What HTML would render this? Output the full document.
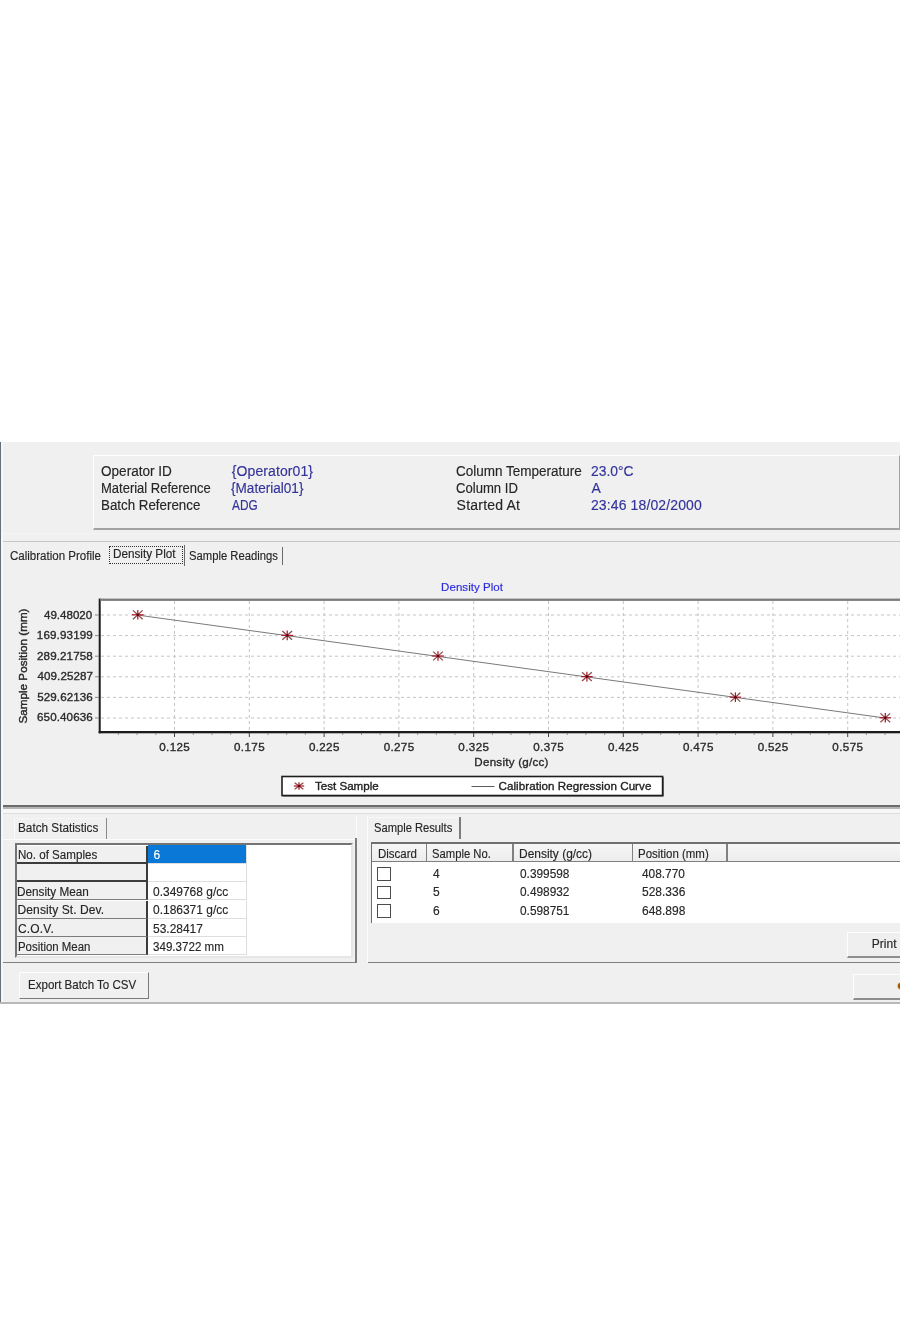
<!DOCTYPE html>
<html><head><meta charset="utf-8"><title>Density Plot</title>
<style>
html,body{margin:0;padding:0;background:#fff;}
body{width:900px;height:1322px;position:relative;overflow:hidden;font-family:"Liberation Sans",sans-serif;}
.abs{position:absolute;}
.t{position:absolute;white-space:pre;line-height:1;transform-origin:0 84.65%;-webkit-text-stroke:0.15px currentColor;font-family:"Liberation Sans",sans-serif;}
#blur{position:absolute;left:0;top:0;width:900px;height:1322px;filter:blur(0.6px);}
</style></head><body><div id="blur">
<div class="abs" style="left:0px;top:442px;width:900px;height:561.7px;background:#f0f0f0"></div>
<div class="abs" style="left:0px;top:442px;width:1.3px;height:561.5px;background:#667078"></div>
<div class="abs" style="left:1.3px;top:442px;width:1.3px;height:561.5px;background:#f5f8fa"></div>
<div class="abs" style="left:0px;top:1002.2px;width:900px;height:1.5px;background:#b8b8b8"></div>
<div class="abs" style="left:93px;top:454.6px;width:807px;height:75px;background:#f0f0f0;border-top:1.3px solid #fdfdfd;border-left:1.3px solid #fdfdfd;border-bottom:2.2px solid #a2a2a2;border-right:1.8px solid #a2a2a2;box-sizing:border-box"></div>
<div class="abs" style="left:3px;top:540.6px;width:897px;height:1.2px;background:#c6c6c6"></div>
<div class="abs" style="left:3px;top:533px;width:897px;height:1px;background:#f5f5f5"></div>
<div class="abs" style="left:109px;top:546px;width:73.5px;height:18px;border:1px dotted #333;box-sizing:border-box"></div>
<div class="abs" style="left:183.5px;top:544.5px;width:1.2px;height:21px;background:#6a6a6a"></div>
<div class="abs" style="left:282.3px;top:546.5px;width:1.2px;height:18px;background:#6a6a6a"></div>
<div class="abs" style="left:3px;top:804.7px;width:897px;height:2.7px;background:#6c6c6c"></div>
<div class="abs" style="left:3px;top:807.4px;width:897px;height:1.2px;background:#b4b4b4"></div>
<div class="abs" style="left:3px;top:808.6px;width:897px;height:4px;background:#f7f7f7"></div>
<div class="abs" style="left:3px;top:812.6px;width:897px;height:1px;background:#dcdcdc"></div>
<div class="abs" style="left:14px;top:818px;width:1px;height:21px;background:#fcfcfc"></div>
<div class="abs" style="left:14px;top:818px;width:92px;height:1px;background:#f6f6f6"></div>
<div class="abs" style="left:105.5px;top:818px;width:1.5px;height:21px;background:#8a8a8a"></div>
<div class="abs" style="left:3px;top:839px;width:353px;height:1px;background:#fcfcfc"></div>
<div class="abs" style="left:3px;top:961.6px;width:353.6px;height:1.6px;background:#808080"></div>
<div class="abs" style="left:355px;top:838.4px;width:1.6px;height:124.8px;background:#7c7c7c"></div>
<div class="abs" style="left:356.2px;top:816px;width:1.2px;height:22.4px;background:#fbfbfb"></div>
<div class="abs" style="left:14.5px;top:842.8px;width:338.5px;height:115.6px;background:#fff;border:2px solid #747474;border-right:2.5px solid #e6e6e6;border-bottom:2.5px solid #e6e6e6;box-sizing:border-box"></div>
<div class="abs" style="left:16.5px;top:845.6px;width:131px;height:18.299999999999955px;background:#f0f0f0;border-right:2px solid #3c3c3c;border-bottom:2px solid #3c3c3c;box-sizing:border-box"></div>
<div class="abs" style="left:147.5px;top:845.6px;width:99px;height:18.299999999999955px;border-right:1px solid #dedede;border-bottom:1px solid #dedede;box-sizing:border-box"></div>
<div class="abs" style="left:16.5px;top:863.9px;width:131px;height:18.300000000000068px;background:#f0f0f0;border-right:2px solid #3c3c3c;border-bottom:2px solid #3c3c3c;box-sizing:border-box"></div>
<div class="abs" style="left:147.5px;top:863.9px;width:99px;height:18.300000000000068px;border-right:1px solid #dedede;border-bottom:1px solid #dedede;box-sizing:border-box"></div>
<div class="abs" style="left:16.5px;top:882.2px;width:131px;height:18.299999999999955px;background:#f0f0f0;border-right:2px solid #3c3c3c;border-bottom:1.5px solid #7c7c7c;box-sizing:border-box"></div>
<div class="abs" style="left:147.5px;top:882.2px;width:99px;height:18.299999999999955px;border-right:1px solid #dedede;border-bottom:1px solid #dedede;box-sizing:border-box"></div>
<div class="abs" style="left:16.5px;top:900.5px;width:131px;height:18.300000000000068px;background:#f0f0f0;border-right:2px solid #3c3c3c;border-bottom:1.5px solid #7c7c7c;box-sizing:border-box"></div>
<div class="abs" style="left:147.5px;top:900.5px;width:99px;height:18.300000000000068px;border-right:1px solid #dedede;border-bottom:1px solid #dedede;box-sizing:border-box"></div>
<div class="abs" style="left:16.5px;top:918.8000000000001px;width:131px;height:18.299999999999955px;background:#f0f0f0;border-right:2px solid #3c3c3c;border-bottom:1.5px solid #7c7c7c;box-sizing:border-box"></div>
<div class="abs" style="left:147.5px;top:918.8000000000001px;width:99px;height:18.299999999999955px;border-right:1px solid #dedede;border-bottom:1px solid #dedede;box-sizing:border-box"></div>
<div class="abs" style="left:16.5px;top:937.1px;width:131px;height:18.300000000000068px;background:#f0f0f0;border-right:2px solid #3c3c3c;border-bottom:1.5px solid #7c7c7c;box-sizing:border-box"></div>
<div class="abs" style="left:147.5px;top:937.1px;width:99px;height:18.300000000000068px;border-right:1px solid #dedede;border-bottom:1px solid #dedede;box-sizing:border-box"></div>
<div class="abs" style="left:148px;top:845px;width:98px;height:17.5px;background:#0a78d6"></div>
<div class="abs" style="left:18.6px;top:972px;width:130.2px;height:26.7px;background:#f0f0f0;border-top:1.3px solid #fdfdfd;border-left:1.3px solid #fdfdfd;border-right:1.6px solid #7a7a7a;border-bottom:1.6px solid #7a7a7a;box-sizing:border-box"></div>
<div class="abs" style="left:366.8px;top:816px;width:1.2px;height:146px;background:#fcfcfc"></div>
<div class="abs" style="left:367.5px;top:817px;width:93px;height:1px;background:#f7f7f7"></div>
<div class="abs" style="left:459.3px;top:817px;width:1.4px;height:21.5px;background:#7c7c7c"></div>
<div class="abs" style="left:367.5px;top:961.6px;width:533px;height:1.6px;background:#808080"></div>
<div class="abs" style="left:370.7px;top:842px;width:530px;height:81.2px;background:#fff;border-top:2px solid #707070;border-left:1.5px solid #707070;box-sizing:border-box"></div>
<div class="abs" style="left:372px;top:843.6px;width:528px;height:18.3px;background:linear-gradient(#f6f6f6,#ededed);border-bottom:1.6px solid #808080;box-sizing:border-box"></div>
<div class="abs" style="left:425.5px;top:843.6px;width:1.5px;height:17.6px;background:#808080"></div>
<div class="abs" style="left:512px;top:843.6px;width:1.5px;height:17.6px;background:#808080"></div>
<div class="abs" style="left:631.5px;top:843.6px;width:1.5px;height:17.6px;background:#808080"></div>
<div class="abs" style="left:726px;top:843.6px;width:1.5px;height:17.6px;background:#808080"></div>
<div class="abs" style="left:377.2px;top:867.2px;width:13.8px;height:13.6px;background:#fff;border:1.6px solid #4c4c4c;box-sizing:border-box"></div>
<div class="abs" style="left:377.2px;top:885.6500000000001px;width:13.8px;height:13.6px;background:#fff;border:1.6px solid #4c4c4c;box-sizing:border-box"></div>
<div class="abs" style="left:377.2px;top:904.1px;width:13.8px;height:13.6px;background:#fff;border:1.6px solid #4c4c4c;box-sizing:border-box"></div>
<div class="abs" style="left:847px;top:932px;width:60px;height:26px;background:#efefef;border-top:1px solid #fdfdfd;border-left:1px solid #fdfdfd;border-bottom:2px solid #8e8e8e;box-sizing:border-box"></div>
<div class="abs" style="left:852.8px;top:973.6px;width:60px;height:26.4px;background:#efefef;border-top:1px solid #fdfdfd;border-left:1px solid #fdfdfd;border-bottom:2px solid #8e8e8e;box-sizing:border-box"></div>
<div class="abs" style="left:898px;top:982.5px;width:6.4px;height:6.4px;background:#9a5408;border-radius:50%;box-shadow:0 0 1px 0.5px #e09a3c"></div>
<svg class="abs" style="left:0;top:0" width="900" height="1322" viewBox="0 0 900 1322">
<rect x="100" y="600" width="800" height="132" fill="#fff"/>
<line x1="174.5" y1="601" x2="174.5" y2="731" stroke="#c4c4c4" stroke-width="1" stroke-dasharray="3,3"/>
<line x1="249.3" y1="601" x2="249.3" y2="731" stroke="#c4c4c4" stroke-width="1" stroke-dasharray="3,3"/>
<line x1="324.1" y1="601" x2="324.1" y2="731" stroke="#c4c4c4" stroke-width="1" stroke-dasharray="3,3"/>
<line x1="398.9" y1="601" x2="398.9" y2="731" stroke="#c4c4c4" stroke-width="1" stroke-dasharray="3,3"/>
<line x1="473.7" y1="601" x2="473.7" y2="731" stroke="#c4c4c4" stroke-width="1" stroke-dasharray="3,3"/>
<line x1="548.5" y1="601" x2="548.5" y2="731" stroke="#c4c4c4" stroke-width="1" stroke-dasharray="3,3"/>
<line x1="623.3" y1="601" x2="623.3" y2="731" stroke="#c4c4c4" stroke-width="1" stroke-dasharray="3,3"/>
<line x1="698.1" y1="601" x2="698.1" y2="731" stroke="#c4c4c4" stroke-width="1" stroke-dasharray="3,3"/>
<line x1="772.9" y1="601" x2="772.9" y2="731" stroke="#c4c4c4" stroke-width="1" stroke-dasharray="3,3"/>
<line x1="847.7" y1="601" x2="847.7" y2="731" stroke="#c4c4c4" stroke-width="1" stroke-dasharray="3,3"/>
<line x1="101" y1="615.0" x2="900" y2="615.0" stroke="#c4c4c4" stroke-width="1" stroke-dasharray="3,3"/>
<line x1="101" y1="635.6" x2="900" y2="635.6" stroke="#c4c4c4" stroke-width="1" stroke-dasharray="3,3"/>
<line x1="101" y1="656.2" x2="900" y2="656.2" stroke="#c4c4c4" stroke-width="1" stroke-dasharray="3,3"/>
<line x1="101" y1="676.8" x2="900" y2="676.8" stroke="#c4c4c4" stroke-width="1" stroke-dasharray="3,3"/>
<line x1="101" y1="697.4" x2="900" y2="697.4" stroke="#c4c4c4" stroke-width="1" stroke-dasharray="3,3"/>
<line x1="101" y1="718.0" x2="900" y2="718.0" stroke="#c4c4c4" stroke-width="1" stroke-dasharray="3,3"/>
<line x1="137.1" y1="615" x2="885.1" y2="718" stroke="#7a7a7a" stroke-width="1"/>
<rect x="98.7" y="598.6" width="2" height="134.7" fill="#1c1c1c"/>
<rect x="100" y="598.6" width="800" height="2.3" fill="#7c7c7c"/>
<rect x="98.7" y="731" width="801.3" height="2.3" fill="#1c1c1c"/>
<line x1="95" y1="615.0" x2="99" y2="615.0" stroke="#888" stroke-width="1"/>
<line x1="95" y1="635.6" x2="99" y2="635.6" stroke="#888" stroke-width="1"/>
<line x1="95" y1="656.2" x2="99" y2="656.2" stroke="#888" stroke-width="1"/>
<line x1="95" y1="676.8" x2="99" y2="676.8" stroke="#888" stroke-width="1"/>
<line x1="95" y1="697.4" x2="99" y2="697.4" stroke="#888" stroke-width="1"/>
<line x1="95" y1="718.0" x2="99" y2="718.0" stroke="#888" stroke-width="1"/>
<line x1="118.4" y1="733" x2="118.4" y2="735.0" stroke="#8a8a8a" stroke-width="1"/>
<line x1="137.1" y1="733" x2="137.1" y2="735.0" stroke="#8a8a8a" stroke-width="1"/>
<line x1="155.8" y1="733" x2="155.8" y2="735.0" stroke="#8a8a8a" stroke-width="1"/>
<line x1="174.5" y1="733" x2="174.5" y2="737.0" stroke="#444" stroke-width="1"/>
<line x1="193.2" y1="733" x2="193.2" y2="735.0" stroke="#8a8a8a" stroke-width="1"/>
<line x1="211.9" y1="733" x2="211.9" y2="735.0" stroke="#8a8a8a" stroke-width="1"/>
<line x1="230.6" y1="733" x2="230.6" y2="735.0" stroke="#8a8a8a" stroke-width="1"/>
<line x1="249.3" y1="733" x2="249.3" y2="737.0" stroke="#444" stroke-width="1"/>
<line x1="268.0" y1="733" x2="268.0" y2="735.0" stroke="#8a8a8a" stroke-width="1"/>
<line x1="286.7" y1="733" x2="286.7" y2="735.0" stroke="#8a8a8a" stroke-width="1"/>
<line x1="305.4" y1="733" x2="305.4" y2="735.0" stroke="#8a8a8a" stroke-width="1"/>
<line x1="324.1" y1="733" x2="324.1" y2="737.0" stroke="#444" stroke-width="1"/>
<line x1="342.8" y1="733" x2="342.8" y2="735.0" stroke="#8a8a8a" stroke-width="1"/>
<line x1="361.5" y1="733" x2="361.5" y2="735.0" stroke="#8a8a8a" stroke-width="1"/>
<line x1="380.2" y1="733" x2="380.2" y2="735.0" stroke="#8a8a8a" stroke-width="1"/>
<line x1="398.9" y1="733" x2="398.9" y2="737.0" stroke="#444" stroke-width="1"/>
<line x1="417.6" y1="733" x2="417.6" y2="735.0" stroke="#8a8a8a" stroke-width="1"/>
<line x1="436.3" y1="733" x2="436.3" y2="735.0" stroke="#8a8a8a" stroke-width="1"/>
<line x1="455.0" y1="733" x2="455.0" y2="735.0" stroke="#8a8a8a" stroke-width="1"/>
<line x1="473.7" y1="733" x2="473.7" y2="737.0" stroke="#444" stroke-width="1"/>
<line x1="492.4" y1="733" x2="492.4" y2="735.0" stroke="#8a8a8a" stroke-width="1"/>
<line x1="511.1" y1="733" x2="511.1" y2="735.0" stroke="#8a8a8a" stroke-width="1"/>
<line x1="529.8" y1="733" x2="529.8" y2="735.0" stroke="#8a8a8a" stroke-width="1"/>
<line x1="548.5" y1="733" x2="548.5" y2="737.0" stroke="#444" stroke-width="1"/>
<line x1="567.2" y1="733" x2="567.2" y2="735.0" stroke="#8a8a8a" stroke-width="1"/>
<line x1="585.9" y1="733" x2="585.9" y2="735.0" stroke="#8a8a8a" stroke-width="1"/>
<line x1="604.6" y1="733" x2="604.6" y2="735.0" stroke="#8a8a8a" stroke-width="1"/>
<line x1="623.3" y1="733" x2="623.3" y2="737.0" stroke="#444" stroke-width="1"/>
<line x1="642.0" y1="733" x2="642.0" y2="735.0" stroke="#8a8a8a" stroke-width="1"/>
<line x1="660.7" y1="733" x2="660.7" y2="735.0" stroke="#8a8a8a" stroke-width="1"/>
<line x1="679.4" y1="733" x2="679.4" y2="735.0" stroke="#8a8a8a" stroke-width="1"/>
<line x1="698.1" y1="733" x2="698.1" y2="737.0" stroke="#444" stroke-width="1"/>
<line x1="716.8" y1="733" x2="716.8" y2="735.0" stroke="#8a8a8a" stroke-width="1"/>
<line x1="735.5" y1="733" x2="735.5" y2="735.0" stroke="#8a8a8a" stroke-width="1"/>
<line x1="754.2" y1="733" x2="754.2" y2="735.0" stroke="#8a8a8a" stroke-width="1"/>
<line x1="772.9" y1="733" x2="772.9" y2="737.0" stroke="#444" stroke-width="1"/>
<line x1="791.6" y1="733" x2="791.6" y2="735.0" stroke="#8a8a8a" stroke-width="1"/>
<line x1="810.3" y1="733" x2="810.3" y2="735.0" stroke="#8a8a8a" stroke-width="1"/>
<line x1="829.0" y1="733" x2="829.0" y2="735.0" stroke="#8a8a8a" stroke-width="1"/>
<line x1="847.7" y1="733" x2="847.7" y2="737.0" stroke="#444" stroke-width="1"/>
<line x1="866.4" y1="733" x2="866.4" y2="735.0" stroke="#8a8a8a" stroke-width="1"/>
<line x1="885.1" y1="733" x2="885.1" y2="735.0" stroke="#8a8a8a" stroke-width="1"/>
<line x1="132.93" y1="610.39" x2="142.67" y2="619.21" stroke="#8c4a4a" stroke-width="1.25"/><line x1="132.93" y1="619.21" x2="142.67" y2="610.39" stroke="#8c4a4a" stroke-width="1.25"/><line x1="132.00" y1="614.80" x2="143.60" y2="614.80" stroke="#b01828" stroke-width="1.25"/><line x1="137.80" y1="609.99" x2="137.80" y2="619.61" stroke="#b01828" stroke-width="1.25"/><circle cx="137.80" cy="614.80" r="1.3" fill="#5c0010"/>
<line x1="282.33" y1="630.99" x2="292.07" y2="639.81" stroke="#8c4a4a" stroke-width="1.25"/><line x1="282.33" y1="639.81" x2="292.07" y2="630.99" stroke="#8c4a4a" stroke-width="1.25"/><line x1="281.40" y1="635.40" x2="293.00" y2="635.40" stroke="#b01828" stroke-width="1.25"/><line x1="287.20" y1="630.59" x2="287.20" y2="640.21" stroke="#b01828" stroke-width="1.25"/><circle cx="287.20" cy="635.40" r="1.3" fill="#5c0010"/>
<line x1="433.13" y1="651.59" x2="442.87" y2="660.41" stroke="#8c4a4a" stroke-width="1.25"/><line x1="433.13" y1="660.41" x2="442.87" y2="651.59" stroke="#8c4a4a" stroke-width="1.25"/><line x1="432.20" y1="656.00" x2="443.80" y2="656.00" stroke="#b01828" stroke-width="1.25"/><line x1="438.00" y1="651.19" x2="438.00" y2="660.81" stroke="#b01828" stroke-width="1.25"/><circle cx="438.00" cy="656.00" r="1.3" fill="#5c0010"/>
<line x1="582.03" y1="672.19" x2="591.77" y2="681.01" stroke="#8c4a4a" stroke-width="1.25"/><line x1="582.03" y1="681.01" x2="591.77" y2="672.19" stroke="#8c4a4a" stroke-width="1.25"/><line x1="581.10" y1="676.60" x2="592.70" y2="676.60" stroke="#b01828" stroke-width="1.25"/><line x1="586.90" y1="671.79" x2="586.90" y2="681.41" stroke="#b01828" stroke-width="1.25"/><circle cx="586.90" cy="676.60" r="1.3" fill="#5c0010"/>
<line x1="730.53" y1="692.79" x2="740.27" y2="701.61" stroke="#8c4a4a" stroke-width="1.25"/><line x1="730.53" y1="701.61" x2="740.27" y2="692.79" stroke="#8c4a4a" stroke-width="1.25"/><line x1="729.60" y1="697.20" x2="741.20" y2="697.20" stroke="#b01828" stroke-width="1.25"/><line x1="735.40" y1="692.39" x2="735.40" y2="702.01" stroke="#b01828" stroke-width="1.25"/><circle cx="735.40" cy="697.20" r="1.3" fill="#5c0010"/>
<line x1="880.43" y1="713.39" x2="890.17" y2="722.21" stroke="#8c4a4a" stroke-width="1.25"/><line x1="880.43" y1="722.21" x2="890.17" y2="713.39" stroke="#8c4a4a" stroke-width="1.25"/><line x1="879.50" y1="717.80" x2="891.10" y2="717.80" stroke="#b01828" stroke-width="1.25"/><line x1="885.30" y1="712.99" x2="885.30" y2="722.61" stroke="#b01828" stroke-width="1.25"/><circle cx="885.30" cy="717.80" r="1.3" fill="#5c0010"/>
<rect x="282.6" y="777.2" width="381" height="19.3" fill="#3a3a3a"/>
<rect x="282" y="776.5" width="380.6" height="19" fill="#fff" stroke="#1e1e1e" stroke-width="1.6"/>
<line x1="294.63" y1="782.64" x2="303.37" y2="789.36" stroke="#8c4a4a" stroke-width="1.25"/><line x1="294.63" y1="789.36" x2="303.37" y2="782.64" stroke="#8c4a4a" stroke-width="1.25"/><line x1="293.80" y1="786.00" x2="304.20" y2="786.00" stroke="#b01828" stroke-width="1.25"/><line x1="299.00" y1="782.33" x2="299.00" y2="789.67" stroke="#b01828" stroke-width="1.25"/><circle cx="299.00" cy="786.00" r="1.3" fill="#5c0010"/>
<line x1="471.5" y1="786.5" x2="494.5" y2="786.5" stroke="#5a5a5a" stroke-width="1"/>
</svg>
<span class="t" style="left:23.2px;top:665.8px;font-size:11.6px;color:#2a2a2a;-webkit-text-stroke:0.4px currentColor;transform:translate(-50%,-50%) rotate(-90deg);transform-origin:center;letter-spacing:0.05px">Sample Position (mm)</span>
<span class="t" style="left:101.34px;top:464.0px;font-size:14px;color:#262626;letter-spacing:0.00px;transform:scaleX(0.9687);">Operator ID</span>
<span class="t" style="left:100.89px;top:481.4px;font-size:14px;color:#262626;letter-spacing:0.00px;transform:scaleX(0.9284);">Material Reference</span>
<span class="t" style="left:100.89px;top:498.3px;font-size:14px;color:#262626;letter-spacing:0.00px;transform:scaleX(0.9522);">Batch Reference</span>
<span class="t" style="left:231.78px;top:464.0px;font-size:14px;color:#33339a;letter-spacing:0.10px;">{Operator01}</span>
<span class="t" style="left:231.32px;top:481.4px;font-size:14px;color:#33339a;letter-spacing:0.00px;transform:scaleX(0.9697);">{Material01}</span>
<span class="t" style="left:232.00px;top:498.3px;font-size:14px;color:#33339a;letter-spacing:0.00px;transform:scaleX(0.8468);">ADG</span>
<span class="t" style="left:456.39px;top:464.0px;font-size:14px;color:#262626;letter-spacing:0.00px;transform:scaleX(0.9644);">Column Temperature</span>
<span class="t" style="left:456.39px;top:481.4px;font-size:14px;color:#262626;letter-spacing:0.00px;transform:scaleX(0.9352);">Column ID</span>
<span class="t" style="left:456.61px;top:498.4px;font-size:14px;color:#262626;letter-spacing:0.21px;">Started At</span>
<span class="t" style="left:590.97px;top:464.0px;font-size:14px;color:#33339a;letter-spacing:0.00px;transform:scaleX(0.9892);">23.0°C</span>
<span class="t" style="left:591.40px;top:481.4px;font-size:14px;color:#33339a;letter-spacing:0.00px;">A</span>
<span class="t" style="left:590.97px;top:498.4px;font-size:14px;color:#33339a;letter-spacing:0.12px;">23:46 18/02/2000</span>
<span class="t" style="left:9.55px;top:549.6px;font-size:12px;color:#262626;letter-spacing:0.00px;transform:scaleX(0.9598);">Calibration Profile</span>
<span class="t" style="left:113.17px;top:548.1px;font-size:12px;color:#262626;letter-spacing:0.00px;transform:scaleX(0.9770);">Density Plot</span>
<span class="t" style="left:188.55px;top:549.6px;font-size:12px;color:#262626;letter-spacing:0.00px;transform:scaleX(0.9385);">Sample Readings</span>
<span class="t" style="left:441.10px;top:581.6px;font-size:11.5px;color:#2a2ae0;letter-spacing:0.05px;">Density Plot</span>
<span class="t" style="left:44.05px;top:608.5px;font-size:11.6px;color:#2a2a2a;letter-spacing:0.00px;transform:scaleX(0.9972);-webkit-text-stroke:0.35px currentColor;">49.48020</span>
<span class="t" style="left:36.83px;top:629.1px;font-size:11.6px;color:#2a2a2a;letter-spacing:0.14px;-webkit-text-stroke:0.35px currentColor;">169.93199</span>
<span class="t" style="left:37.05px;top:649.6px;font-size:11.6px;color:#2a2a2a;letter-spacing:0.11px;-webkit-text-stroke:0.35px currentColor;">289.21758</span>
<span class="t" style="left:37.50px;top:670.4px;font-size:11.6px;color:#2a2a2a;letter-spacing:0.08px;-webkit-text-stroke:0.35px currentColor;">409.25287</span>
<span class="t" style="left:37.27px;top:691.0px;font-size:11.6px;color:#2a2a2a;letter-spacing:0.08px;-webkit-text-stroke:0.35px currentColor;">529.62136</span>
<span class="t" style="left:37.05px;top:710.9px;font-size:11.6px;color:#2a2a2a;letter-spacing:0.11px;-webkit-text-stroke:0.35px currentColor;">650.40636</span>
<span class="t" style="left:159.28px;top:741.2px;font-size:11.6px;color:#2a2a2a;letter-spacing:0.36px;-webkit-text-stroke:0.35px currentColor;">0.125</span>
<span class="t" style="left:233.99px;top:741.2px;font-size:11.6px;color:#2a2a2a;letter-spacing:0.42px;-webkit-text-stroke:0.35px currentColor;">0.175</span>
<span class="t" style="left:308.92px;top:741.2px;font-size:11.6px;color:#2a2a2a;letter-spacing:0.36px;-webkit-text-stroke:0.35px currentColor;">0.225</span>
<span class="t" style="left:383.63px;top:741.2px;font-size:11.6px;color:#2a2a2a;letter-spacing:0.36px;-webkit-text-stroke:0.35px currentColor;">0.275</span>
<span class="t" style="left:458.34px;top:741.2px;font-size:11.6px;color:#2a2a2a;letter-spacing:0.42px;-webkit-text-stroke:0.35px currentColor;">0.325</span>
<span class="t" style="left:533.27px;top:741.2px;font-size:11.6px;color:#2a2a2a;letter-spacing:0.36px;-webkit-text-stroke:0.35px currentColor;">0.375</span>
<span class="t" style="left:607.98px;top:741.2px;font-size:11.6px;color:#2a2a2a;letter-spacing:0.42px;-webkit-text-stroke:0.35px currentColor;">0.425</span>
<span class="t" style="left:682.92px;top:741.2px;font-size:11.6px;color:#2a2a2a;letter-spacing:0.36px;-webkit-text-stroke:0.35px currentColor;">0.475</span>
<span class="t" style="left:757.63px;top:741.2px;font-size:11.6px;color:#2a2a2a;letter-spacing:0.36px;-webkit-text-stroke:0.35px currentColor;">0.525</span>
<span class="t" style="left:832.34px;top:741.2px;font-size:11.6px;color:#2a2a2a;letter-spacing:0.42px;-webkit-text-stroke:0.35px currentColor;">0.575</span>
<span class="t" style="left:474.32px;top:756.2px;font-size:11.6px;color:#2a2a2a;letter-spacing:0.25px;-webkit-text-stroke:0.35px currentColor;">Density (g/cc)</span>
<span class="t" style="left:315.00px;top:780.2px;font-size:11.6px;color:#222;letter-spacing:0.00px;transform:scaleX(0.9989);-webkit-text-stroke:0.35px currentColor;">Test Sample</span>
<span class="t" style="left:498.55px;top:780.2px;font-size:11.6px;color:#222;letter-spacing:0.05px;-webkit-text-stroke:0.35px currentColor;">Calibration Regression Curve</span>
<span class="t" style="left:17.54px;top:822.1px;font-size:12px;color:#262626;letter-spacing:0.00px;transform:scaleX(0.9797);">Batch Statistics</span>
<span class="t" style="left:27.88px;top:978.7px;font-size:12.4px;color:#262626;letter-spacing:0.00px;transform:scaleX(0.9312);">Export Batch To CSV</span>
<span class="t" style="left:17.82px;top:849.1px;font-size:12px;color:#262626;letter-spacing:0.00px;transform:scaleX(0.9653);">No. of Samples</span>
<span class="t" style="left:153.60px;top:849.1px;font-size:12px;color:#fff;letter-spacing:0.00px;">6</span>
<span class="t" style="left:17.38px;top:885.9px;font-size:12px;color:#262626;letter-spacing:0.00px;transform:scaleX(0.9799);">Density Mean</span>
<span class="t" style="left:152.60px;top:885.9px;font-size:12px;color:#262626;letter-spacing:0.00px;transform:scaleX(0.9970);">0.349768 g/cc</span>
<span class="t" style="left:17.60px;top:904.4px;font-size:12px;color:#262626;letter-spacing:0.09px;">Density St. Dev.</span>
<span class="t" style="left:152.60px;top:904.4px;font-size:12px;color:#262626;letter-spacing:0.00px;transform:scaleX(0.9970);">0.186371 g/cc</span>
<span class="t" style="left:18.05px;top:922.9px;font-size:12px;color:#262626;letter-spacing:0.16px;">C.O.V.</span>
<span class="t" style="left:152.60px;top:922.9px;font-size:12px;color:#262626;letter-spacing:0.00px;transform:scaleX(0.9971);">53.28417</span>
<span class="t" style="left:17.82px;top:941.2px;font-size:12px;color:#262626;letter-spacing:0.00px;transform:scaleX(0.9518);">Position Mean</span>
<span class="t" style="left:152.60px;top:941.2px;font-size:12px;color:#262626;letter-spacing:0.00px;transform:scaleX(0.9654);">349.3722 mm</span>
<span class="t" style="left:373.76px;top:821.8px;font-size:12px;color:#262626;letter-spacing:0.00px;transform:scaleX(0.9312);">Sample Results</span>
<span class="t" style="left:377.99px;top:848.0px;font-size:12px;color:#262626;letter-spacing:0.00px;transform:scaleX(0.9576);">Discard</span>
<span class="t" style="left:432.34px;top:848.0px;font-size:12px;color:#262626;letter-spacing:0.00px;transform:scaleX(0.9381);">Sample No.</span>
<span class="t" style="left:519.10px;top:848.0px;font-size:12px;color:#262626;letter-spacing:0.00px;transform:scaleX(0.9958);">Density (g/cc)</span>
<span class="t" style="left:637.98px;top:848.0px;font-size:12px;color:#262626;letter-spacing:0.00px;transform:scaleX(0.9556);">Position (mm)</span>
<span class="t" style="left:432.92px;top:867.8px;font-size:12px;color:#262626;letter-spacing:0.00px;">4</span>
<span class="t" style="left:519.55px;top:867.8px;font-size:12px;color:#262626;letter-spacing:0.00px;transform:scaleX(0.9871);">0.399598</span>
<span class="t" style="left:642.12px;top:867.8px;font-size:12px;color:#262626;letter-spacing:0.00px;transform:scaleX(0.9885);">408.770</span>
<span class="t" style="left:432.92px;top:886.2px;font-size:12px;color:#262626;letter-spacing:0.00px;">5</span>
<span class="t" style="left:519.55px;top:886.2px;font-size:12px;color:#262626;letter-spacing:0.00px;transform:scaleX(0.9871);">0.498932</span>
<span class="t" style="left:642.34px;top:886.2px;font-size:12px;color:#262626;letter-spacing:0.00px;transform:scaleX(0.9992);">528.336</span>
<span class="t" style="left:432.92px;top:904.6px;font-size:12px;color:#262626;letter-spacing:0.00px;">6</span>
<span class="t" style="left:519.55px;top:904.6px;font-size:12px;color:#262626;letter-spacing:0.00px;transform:scaleX(0.9871);">0.598751</span>
<span class="t" style="left:642.34px;top:904.6px;font-size:12px;color:#262626;letter-spacing:0.00px;transform:scaleX(0.9992);">648.898</span>
<span class="t" style="left:871.67px;top:937.7px;font-size:12px;color:#262626;letter-spacing:0.05px;">Print</span>
</div></body></html>
